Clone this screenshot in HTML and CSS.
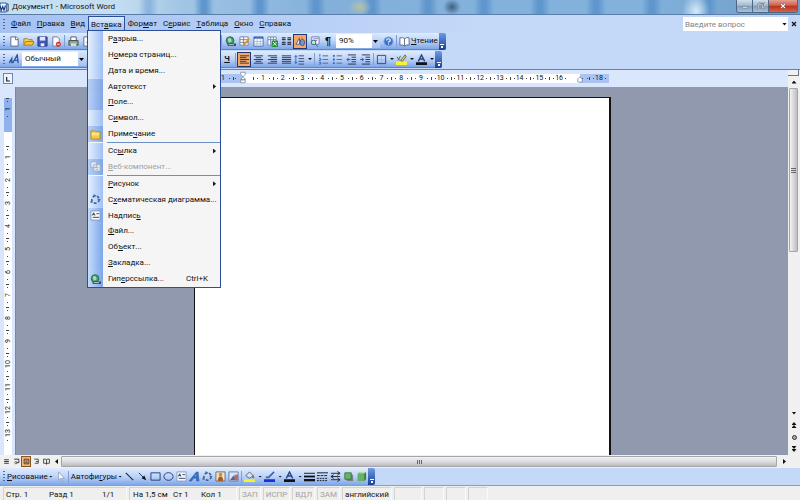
FILE: index.html
```html
<!DOCTYPE html>
<html lang="ru">
<head>
<meta charset="utf-8">
<title>Документ1 - Microsoft Word</title>
<link rel="stylesheet" href="styles.css">
</head>
<body>
<svg class="defs" aria-hidden="true">
  <symbol id="new" viewBox="0 0 12 12"><path d="M2 1h6l2 2v8H2z" fill="#fff" stroke="#56688f"/><path d="M7 1v3h3" fill="none" stroke="#56688f"/></symbol>
  <symbol id="open" viewBox="0 0 12 12"><path d="M1 10V3h4l1 1h4v2" fill="#f5d35c" stroke="#a87d18"/><path d="M1 10l2-4h9l-2 4z" fill="#ffc629" stroke="#a87d18"/></symbol>
  <symbol id="save" viewBox="0 0 12 12"><path d="M1 1h10v10H1z" fill="#4256b8" stroke="#27357e"/><path d="M3 1h6v4H3z" fill="#dfe8ff"/><path d="M4 8h4v3H4z" fill="#eef"/></symbol>
  <symbol id="perm" viewBox="0 0 12 12"><path d="M2 1h5l2 2v8H2z" fill="#fff" stroke="#6c7695"/><circle cx="8" cy="9" r="2.7" fill="#d9331f"/><path d="M6.5 9h3" stroke="#fff"/></symbol>
  <symbol id="print" viewBox="0 0 12 12"><path d="M3 1h6v4H3z" fill="#fff" stroke="#555"/><path d="M1 5h10v5H1z" fill="#9aa39d" stroke="#3d4b49"/><path d="M3 8h6v3H3z" fill="#cfe4c0"/></symbol>
  <symbol id="preview" viewBox="0 0 12 12"><path d="M2 1h6v10H2z" fill="#fff" stroke="#56688f"/><circle cx="8" cy="7" r="2.5" fill="#cbe0f7" stroke="#444"/><path d="M9.5 9l2 2" stroke="#444"/></symbol>
  <symbol id="globe" viewBox="0 0 12 12"><circle cx="5.5" cy="5" r="4.2" fill="#3f9b72" stroke="#2c6852"/><path d="M3 3q3-2 4 1t-3 3z" fill="#a5dfb2"/><path d="M4 9.500h3M8 9.500h3" stroke="#34404d" stroke-width="2.600" stroke-linecap="round"/><path d="M4 9.500h6" stroke="#dce5ee"/></symbol>
  <symbol id="drawtable" viewBox="0 0 12 12"><path d="M1 1h9v9H1zM1 4h9M5 1v9M1 7h9" fill="#fff" stroke="#77809b"/><path d="M5 10l6-7" stroke="#d89524" stroke-width="2"/></symbol>
  <symbol id="table" viewBox="0 0 12 12"><path d="M1 1h10v10H1z" fill="#fff" stroke="#4668ad"/><path d="M1 2h10" stroke="#3566c2" stroke-width="2"/><path d="M4.500 2v9M8 2v9M1 6h10M1 8.500h10" stroke="#a9bbdd"/></symbol>
  <symbol id="excel" viewBox="0 0 12 12"><path d="M1 1h9v9H1zM1 4h9M4 1v9M7 1v9" fill="#fff" stroke="#6b86b5"/><path d="M5 5h7v7H5z" fill="#278d45"/><path d="M6.500 6.500l4 4M10.500 6.500l-4 4" stroke="#fff"/></symbol>
  <symbol id="columns" viewBox="0 0 12 12"><path d="M1 2h4M1 4h4M1 7h4M1 9h4M7 2h4M7 4h4M7 7h4M7 9h4" stroke="#333b52" stroke-width="1.500"/></symbol>
  <symbol id="drawing" viewBox="0 0 12 12"><path d="M1 9L5 2v7z" fill="#f4f4f4" stroke="#4f5b78"/><ellipse cx="8" cy="7" rx="2.500" ry="3.500" fill="#7993cf" stroke="#44548e"/><path d="M7 1l4 5" stroke="#c47b2a"/></symbol>
  <symbol id="docmap" viewBox="0 0 12 12"><path d="M3 1h8v8H3z" fill="#fff" stroke="#5778b8"/><path d="M5 3h5M5 5h4" stroke="#86a"/><circle cx="5" cy="7" r="2.500" fill="#c5e2cf" stroke="#367"/><path d="M7 9l3 3" stroke="#367"/></symbol>
  <symbol id="help" viewBox="0 0 12 12"><circle cx="6" cy="6" r="5" fill="#3c73cf" stroke="#85a9df"/><path d="M4 5q0-2 2-2t2 1.500q0 1-2 2v.700M6 8.200v1.200" fill="none" stroke="#fff" stroke-width="1.200"/></symbol>
  <symbol id="book" viewBox="0 0 12 12"><path d="M6 3Q4 1 1 2v8q3-1 5 1 2-2 5-1V2Q8 1 6 3zM6 3v8" fill="#fff" stroke="#5a6785"/></symbol>
  <symbol id="left" viewBox="0 0 12 12"><path d="M1 2h10M1 4h7M1 6h10M1 8h7M1 10h10" stroke="#29304a"/></symbol>
  <symbol id="center" viewBox="0 0 12 12"><path d="M1 2h10M3 4h6M1 6h10M3 8h6M1 10h10" stroke="#29304a"/></symbol>
  <symbol id="right" viewBox="0 0 12 12"><path d="M1 2h10M4 4h7M1 6h10M4 8h7M1 10h10" stroke="#29304a"/></symbol>
  <symbol id="justify" viewBox="0 0 12 12"><path d="M1 2h10M1 4h10M1 6h10M1 8h10M1 10h10" stroke="#29304a"/></symbol>
  <symbol id="spacing" viewBox="0 0 12 12"><path d="M5 2h6M5 5h6M5 8h6M5 11h6" stroke="#3b4563"/><path d="M2 2v8M.500 3.500L2 1.500l1.500 2M.500 8.500l1.500 2 1.500-2" fill="none" stroke="#3465ba"/></symbol>
  <symbol id="numbers" viewBox="0 0 12 12"><path d="M5 2h6M5 6h6M5 10h6" stroke="#59647f"/><path d="M2 0v3M1 5h2v2H1M1 9h2v2H1" fill="none" stroke="#3465ba"/></symbol>
  <symbol id="bullets" viewBox="0 0 12 12"><path d="M5 2h6M5 6h6M5 10h6" stroke="#59647f"/><path d="M1 1h2v2H1zM1 5h2v2H1zM1 9h2v2H1z" fill="#3465ba"/></symbol>
  <symbol id="outdent" viewBox="0 0 12 12"><path d="M2 1h9M6 3.500h5M6 6h5M6 8.500h5M2 11h9" stroke="#29304a"/><path d="M5 6H1M3 4L1 6l2 2" fill="none" stroke="#2455b2"/></symbol>
  <symbol id="indent" viewBox="0 0 12 12"><path d="M2 1h9M6 3.500h5M6 6h5M6 8.500h5M2 11h9" stroke="#29304a"/><path d="M0 6h4M2 4l2 2-2 2" fill="none" stroke="#2455b2"/></symbol>
  <symbol id="border" viewBox="0 0 12 12"><path d="M1.500 1.500h9v9h-9z" fill="none" stroke="#354260"/><path d="M6 2v8M2 6h8" stroke="#9aabc9" stroke-dasharray="1 1"/></symbol>
  <symbol id="marker" viewBox="0 0 12 12"><path d="M0 8h12v4H0z" fill="#fbf12f"/><path d="M1 3l3 4M2 7l3-5" stroke="#465"/><path d="M5 7l5-6 1 2-4 5z" fill="#dfd26a" stroke="#606335"/></symbol>
  <symbol id="fontcolor" viewBox="0 0 12 12"><path d="M0 9h12v3H0z" fill="#111"/><path d="M2.500 8L6 1l3.500 7M4 5.500h4" fill="none" stroke="#2a4580" stroke-width="1.500"/></symbol>
  <symbol id="styles" viewBox="0 0 12 12"><path d="M0 10l3-5v5M1 8h2M4 10L9 1l1 9M6 7h4" fill="none" stroke="#3156a9" stroke-width="1.500"/></symbol>
  <symbol id="pointer" viewBox="0 0 12 12"><path d="M4 1v9l2-2 2 4 1-1-2-3h3z" fill="#fff" stroke="#8b96ac" stroke-width=".800"/></symbol>
  <symbol id="line" viewBox="0 0 12 12"><path d="M2 2l8 8" stroke="#1e2949" stroke-width="1.200"/></symbol>
  <symbol id="arrow" viewBox="0 0 12 12"><path d="M2 2l7 7" stroke="#1e2949"/><path d="M10 10L5 8l3-3z" fill="#111"/></symbol>
  <symbol id="rect" viewBox="0 0 12 12"><path d="M1 2h10v8H1z" fill="none" stroke="#253b74"/></symbol>
  <symbol id="oval" viewBox="0 0 12 12"><ellipse cx="6" cy="6" rx="5" ry="4.200" fill="none" stroke="#253b74"/></symbol>
  <symbol id="textbox" viewBox="0 0 12 12"><path d="M1 1h10v10H1z" fill="#fafbff" stroke="#8798bb"/><path d="M2.500 6L4 3l1.500 3M3 5h2M7 4h3M3 8h7" fill="none" stroke="#303b57"/></symbol>
  <symbol id="wordart" viewBox="0 0 12 12"><path d="M0 11l8-10h2l1 10H8V8H5l-2 3zM6 6h2V3z" fill="#2f6dcc" stroke="#3c5fa0" stroke-width=".500" fill-rule="evenodd"/></symbol>
  <symbol id="diagram" viewBox="0 0 12 12"><circle cx="6" cy="6" r="4" fill="none" stroke="#35578c" stroke-width="1.600" stroke-dasharray="3 2"/><path d="M4 0l3 2-3 2zM12 6l-3 2-1-3zM2 6l1 4-3-1z" fill="#526c96"/></symbol>
  <symbol id="clip" viewBox="0 0 12 12"><path d="M1 1h10v10H1z" fill="#ece6c9" stroke="#667"/><circle cx="6" cy="4" r="2" fill="#d68a2c"/><path d="M3 11q0-5 3-5t3 5z" fill="#a55f22"/></symbol>
  <symbol id="picture" viewBox="0 0 12 12"><path d="M1 1h10v10H1z" fill="#d8e6ff" stroke="#667b9b"/><path d="M2 10l4-5 4 5z" fill="#526599"/><path d="M7 4h4v6H7z" fill="#b86a66"/></symbol>
  <symbol id="fill" viewBox="0 0 12 12"><path d="M0 9h12v3H0z" fill="#fbf12f"/><path d="M2 5l4-4 4 4-4 3z" fill="#dfe2e8" stroke="#546078"/><path d="M10 5v3" stroke="#8a7a26" stroke-width="2"/></symbol>
  <symbol id="brush" viewBox="0 0 12 12"><path d="M0 9h12v3H0z" fill="#1731d5"/><path d="M2 7h3l6-6" fill="none" stroke="#4065a9" stroke-width="1.800"/></symbol>
  <symbol id="weight" viewBox="0 0 12 12"><path d="M0 2.500h12" stroke="#111"/><path d="M0 6h12" stroke="#111" stroke-width="2"/><path d="M0 10h12" stroke="#111" stroke-width="2.500"/></symbol>
  <symbol id="dash" viewBox="0 0 12 12"><path d="M0 2h12" stroke="#111"/><path d="M0 5h12" stroke="#111" stroke-dasharray="3 1"/><path d="M0 8h12M0 10.500h12" stroke="#111" stroke-dasharray="2 1"/></symbol>
  <symbol id="arrows" viewBox="0 0 12 12"><path d="M1 2.500h10M1 6h10M1 9.500h10" stroke="#222"/><path d="M8 .500l3 2-3 2M4 4L1 6l3 2M8 7.500l3 2-3 2" fill="none" stroke="#222"/></symbol>
  <symbol id="shadow" viewBox="0 0 12 12"><path d="M4 4h7v7H4z" fill="#78827d"/><path d="M2 2h7v7H2z" fill="#67b365" stroke="#387a42"/></symbol>
  <symbol id="cube" viewBox="0 0 12 12"><path d="M2 3l2-2h7v8l-2 2H2z" fill="#397d3e"/><path d="M2 3l2-2h7L9 3z" fill="#b0dca0"/><path d="M2 3h7v8H2z" fill="#67b365"/></symbol>
  <symbol id="note" viewBox="0 0 12 12"><path d="M1 2h4l1 1h5v8H1z" fill="#f5c946" stroke="#ab8730"/><path d="M2 4h8v3H2z" fill="#ffe484"/></symbol>
  <symbol id="web" viewBox="0 0 12 12"><path d="M1 1h6v6H1zM4 4h7v7H4z" fill="#e5eaf4" stroke="#a3afc5"/><path d="M6 7h3M6 9h3" stroke="#a3afc5"/></symbol>
  <symbol id="views" viewBox="0 0 12 12"><path d="M2 3h8M2 6h8M2 9h8" stroke="#222" stroke-width="1.500"/></symbol>
  <symbol id="webview" viewBox="0 0 12 12"><path d="M2 2h8v6H6" fill="none" stroke="#222" stroke-width="1.500"/><circle cx="5" cy="8" r="2" fill="none" stroke="#222"/></symbol>
  <symbol id="printview" viewBox="0 0 12 12"><path d="M2 2h8v8H2zM4 5h4M4 7.500h4" fill="none" stroke="#222" stroke-width="1.300"/></symbol>
  <symbol id="outline" viewBox="0 0 12 12"><path d="M2 2h7v4H5M9 6v3H3" fill="none" stroke="#222" stroke-width="1.300"/></symbol>
  <symbol id="reading" viewBox="0 0 12 12"><path d="M1 2h4l1 1 1-1h4v7H7l-1 2-1-2H1zM6 3v7" fill="none" stroke="#222" stroke-width="1.300"/></symbol>
</svg>

<header class="titlebar">
  <svg class="logo" viewBox="0 0 10 12" aria-hidden="true"><path d="M0 1h7v10H0z" fill="#eef5ff" stroke="#244d91"/><path d="M0 4l1.500 5L3 5l1.500 4L6 4" fill="none" stroke="#163c86" stroke-width="1.300"/><path d="M8 2h1v8H8" fill="none" stroke="#333"/></svg>
  <h1>Документ1 - Microsoft Word</h1>
  <div class="wincontrols">
    <button aria-label="Свернуть"><svg viewBox="0 0 12 12"><path d="M2 7h8v2H2z" fill="#fff" stroke="#53657a" stroke-width=".700"/></svg></button>
    <button aria-label="Восстановить"><svg viewBox="0 0 12 12"><path d="M4 3V1h7v7H9M2 4h6v7H2z" fill="none" stroke="#53657a" stroke-width="2.400"/><path d="M4 3V1h7v7H9M2 4h6v7H2z" fill="none" stroke="#fff"/></svg></button>
    <button class="close" aria-label="Закрыть"><svg viewBox="0 0 12 12"><path d="M3 3l6 6M9 3L3 9" stroke="#652b2b" stroke-width="3"/><path d="M3 3l6 6M9 3L3 9" stroke="#fff" stroke-width="1.800"/></svg></button>
  </div>
</header>

<nav class="menubar">
  <span class="grip"></span>
  <button><u>Ф</u>айл</button>
  <button><u>П</u>равка</button>
  <button><u>В</u>ид</button>
  <div class="opened">
    <button class="active">Вст<u>а</u>вка</button>
    <div class="menu">
      <button>Р<u>а</u>зрыв...</button>
      <button>Н<u>о</u>мера страниц...</button>
      <button><u>Д</u>ата и время...</button>
      <button class="extra">Ав<u>т</u>отекст<i class="sub"></i></button>
      <button class="extra"><u>П</u>оле...</button>
      <button>С<u>и</u>мвол...</button>
      <button class="extra"><svg><use href="#note"/></svg>Приме<u>ч</u>ание</button>
      <hr>
      <button>Сс<u>ы</u>лка<i class="sub"></i></button>
      <button class="extra" disabled><svg><use href="#web"/></svg><u>В</u>еб-компонент...</button>
      <hr>
      <button><u>Р</u>исунок<i class="sub"></i></button>
      <button><svg><use href="#diagram"/></svg>С<u>х</u>ематическая диаграмма...</button>
      <button class="deep"><svg><use href="#textbox"/></svg>Надпис<u>ь</u></button>
      <button class="deep"><u>Ф</u>айл...</button>
      <button class="deep">Об<u>ъ</u>ект...</button>
      <button class="deep"><u>З</u>акладка...</button>
      <button class="deep"><svg><use href="#globe"/></svg>Гип<u>е</u>рссылка...<kbd>Ctrl+K</kbd></button>
    </div>
  </div>
  <button>Фор<u>м</u>ат</button>
  <button>С<u>е</u>рвис</button>
  <button><u>Т</u>аблица</button>
  <button><u>О</u>кно</button>
  <button><u>С</u>правка</button>
  <label class="ask"><input type="text" placeholder="Введите вопрос" aria-label="Введите вопрос"><i class="drop"></i></label>
  <button class="docclose" aria-label="Закрыть документ"><svg viewBox="0 0 12 12"><path d="M2 2l8 8M10 2l-8 8" stroke="#111" stroke-width="2.400"/></svg></button>
</nav>

<div class="toolrow">
  <div class="toolbar">
    <div class="lead">
      <span class="grip"></span>
      <button aria-label="Создать"><svg><use href="#new"/></svg></button>
      <button aria-label="Открыть"><svg><use href="#open"/></svg></button>
      <button aria-label="Сохранить"><svg><use href="#save"/></svg></button>
      <button aria-label="Разрешения"><svg><use href="#perm"/></svg></button>
      <span class="sep"></span>
      <button aria-label="Печать"><svg><use href="#print"/></svg></button>
      <button aria-label="Просмотр"><svg><use href="#preview"/></svg></button>
    </div>
    <span class="sep"></span>
    <button aria-label="Гиперссылка"><svg><use href="#globe"/></svg></button>
    <button aria-label="Границы"><svg><use href="#drawtable"/></svg></button>
    <button aria-label="Таблица"><svg><use href="#table"/></svg></button>
    <button aria-label="Excel"><svg><use href="#excel"/></svg></button>
    <button aria-label="Колонки"><svg><use href="#columns"/></svg></button>
    <button class="on" aria-label="Рисование"><svg><use href="#drawing"/></svg></button>
    <button aria-label="Схема документа"><svg><use href="#docmap"/></svg></button>
    <button class="pilcrow" aria-label="Знаки">¶</button>
    <select class="zoom" aria-label="Масштаб"><option>90%</option></select>
    <button aria-label="Справка"><svg><use href="#help"/></svg></button>
    <span class="sep"></span>
    <button class="wide"><svg><use href="#book"/></svg><span><u>Ч</u>тение</span></button>
    <button class="cap" aria-label="Параметры"><i></i></button>
  </div>
</div>
<div class="toolrow">
  <div class="toolbar">
    <div class="lead">
      <span class="grip"></span>
      <button aria-label="Стили"><svg><use href="#styles"/></svg></button>
      <select class="style" aria-label="Стиль"><option>Обычный</option></select>
    </div>
    <button class="underline" aria-label="Подчеркнутый"><b><u>Ч</u></b></button>
    <span class="sep"></span>
    <button class="on" aria-label="По левому краю"><svg><use href="#left"/></svg></button>
    <button aria-label="По центру"><svg><use href="#center"/></svg></button>
    <button aria-label="По правому краю"><svg><use href="#right"/></svg></button>
    <button aria-label="По ширине"><svg><use href="#justify"/></svg></button>
    <button class="split" aria-label="Интервал"><svg><use href="#spacing"/></svg><i class="drop"></i></button>
    <span class="sep"></span>
    <button aria-label="Нумерация"><svg><use href="#numbers"/></svg></button>
    <button aria-label="Маркеры"><svg><use href="#bullets"/></svg></button>
    <button aria-label="Уменьшить отступ"><svg><use href="#outdent"/></svg></button>
    <button aria-label="Увеличить отступ"><svg><use href="#indent"/></svg></button>
    <span class="sep"></span>
    <button class="split" aria-label="Граница"><svg><use href="#border"/></svg><i class="drop"></i></button>
    <button class="split" aria-label="Выделение"><svg><use href="#marker"/></svg><i class="drop"></i></button>
    <button class="split" aria-label="Цвет шрифта"><svg><use href="#fontcolor"/></svg><i class="drop"></i></button>
    <button class="cap" aria-label="Параметры"><i></i></button>
  </div>
</div>

<main class="work">
  <div class="editor">
    <div class="hruler">
      <button class="tab" aria-label="Табуляция"><svg viewBox="0 0 12 12"><path d="M4 3v6h5" fill="none" stroke="#222" stroke-width="1.800"/></svg></button>
      <div class="hscale">
        <ol class="ticks margin start"><li></li><li>1</li><li></li></ol>
        <ol class="ticks body"></ol>
        <ol class="ticks margin end"><li></li><li>18</li></ol>
        <svg class="handle first" viewBox="0 0 8 16"><path d="M1 1h6v3L4 7 1 4zM4 7l3 3v1H1v-1zM1 11h6v4H1z" fill="#fff" stroke="#7a8497"/></svg>
        <svg class="handle last" viewBox="0 0 8 16"><path d="M4 7l3 3v4H1v-4z" fill="#fff" stroke="#7a8497"/></svg>
      </div>
    </div>
    <div class="canvas">
      <div class="vruler"><ol class="vticks top"><li>1</li></ol><ol class="vticks rest"></ol></div>
      <div class="desk"><article class="page"></article></div>
    </div>
  </div>
  <div class="vscroll">
    <span class="splitter"></span>
    <button aria-label="Вверх"><i class="up"></i></button>
    <div class="vthumb"><i class="ridge"></i></div>
    <button aria-label="Вниз"><i class="drop"></i></button>
    <button aria-label="Предыдущая"><i class="up"></i><i class="up"></i></button>
    <button aria-label="Выбор объекта"><i class="ball"></i></button>
    <button aria-label="Следующая"><i class="drop"></i><i class="drop"></i></button>
  </div>
</main>

<div class="hscroll">
  <button aria-label="Обычный"><svg><use href="#views"/></svg></button>
  <button aria-label="Веб-документ"><svg><use href="#webview"/></svg></button>
  <button class="on" aria-label="Разметка"><svg><use href="#printview"/></svg></button>
  <button aria-label="Структура"><svg><use href="#outline"/></svg></button>
  <button aria-label="Чтение"><svg><use href="#reading"/></svg></button>
  <button class="back" aria-label="Влево"><i class="sub flip"></i></button>
  <div class="hthumb"><i class="ridge"></i></div>
  <button class="fwd" aria-label="Вправо"><i class="sub"></i></button>
</div>

<div class="toolrow drawrow">
  <div class="toolbar">
    <span class="grip"></span>
    <button class="word"><span><u>Р</u>исование</span><i class="drop"></i></button>
    <button class="pick" aria-label="Выбор"><svg><use href="#pointer"/></svg></button>
    <span class="sep"></span>
    <button class="word auto"><span>Автофи<u>г</u>уры</span><i class="drop"></i></button>
    <button aria-label="Линия"><svg><use href="#line"/></svg></button>
    <button aria-label="Стрелка"><svg><use href="#arrow"/></svg></button>
    <button aria-label="Прямоугольник"><svg><use href="#rect"/></svg></button>
    <button aria-label="Овал"><svg><use href="#oval"/></svg></button>
    <button aria-label="Надпись"><svg><use href="#textbox"/></svg></button>
    <button aria-label="WordArt"><svg><use href="#wordart"/></svg></button>
    <button aria-label="Диаграмма"><svg><use href="#diagram"/></svg></button>
    <button aria-label="Картинка"><svg><use href="#clip"/></svg></button>
    <button aria-label="Рисунок"><svg><use href="#picture"/></svg></button>
    <span class="sep"></span>
    <button class="split" aria-label="Заливка"><svg><use href="#fill"/></svg><i class="drop"></i></button>
    <button class="split" aria-label="Цвет линий"><svg><use href="#brush"/></svg><i class="drop"></i></button>
    <button class="split" aria-label="Цвет шрифта"><svg><use href="#fontcolor"/></svg><i class="drop"></i></button>
    <button aria-label="Тип линии"><svg><use href="#weight"/></svg></button>
    <button aria-label="Тип штриха"><svg><use href="#dash"/></svg></button>
    <button aria-label="Вид стрелки"><svg><use href="#arrows"/></svg></button>
    <button aria-label="Тень"><svg><use href="#shadow"/></svg></button>
    <button aria-label="Объем"><svg><use href="#cube"/></svg></button>
    <button class="cap" aria-label="Параметры"><i></i></button>
  </div>
</div>

<footer class="status">
  <div class="panel where"><span>Стр. 1</span><span>Разд 1</span><span>1/1</span></div>
  <div class="panel at"><span>На 1,5 см</span><span>Ст 1</span><span>Кол 1</span></div>
  <div class="panel off">ЗАП</div>
  <div class="panel off">ИСПР</div>
  <div class="panel off">ВДЛ</div>
  <div class="panel off">ЗАМ</div>
  <div class="panel lang">английский</div>
  <div class="panel blank"></div>
  <div class="panel blank"></div>
  <div class="panel blank"></div>
  <div class="panel blank"></div>
</footer>
<script src="rulers.js"></script>
</body>
</html>
```
FILE: rulers.js
```js
// Fills both rulers with their centimetre marks.
function fill(selector, count) {
  const list = document.querySelector(selector);
  for (let n = 1; n <= count; n += 1) {
    const item = document.createElement('li');
    item.textContent = n;
    list.append(item);
  }
}
fill('.ticks.body', 16);
fill('.vticks.rest', 13);
```
FILE: styles.css
```css
* { box-sizing: border-box; }
body {
  margin: 0;
  height: 100vh;
  display: flex;
  flex-direction: column;
  overflow: hidden;
  background: #c4d8f8;
  color: #111;
  font: 8px/12px Roboto, "Liberation Sans", sans-serif;
}
button, input, select { font: inherit; color: inherit; margin: 0; padding: 0; border: 0; background: none; border-radius: 0; }
ol { margin: 0; padding: 0; list-style: none; }
.defs { position: absolute; width: 0; height: 0; }
button svg { width: 11px; height: 11px; flex: none; }
button { display: flex; align-items: center; justify-content: center; white-space: nowrap; }
u { text-underline-offset: 1px; text-decoration-thickness: 1px; }

.drop, .sub, .up { flex: none; width: 5px; height: 3px; background: #111; clip-path: polygon(0 0, 100% 0, 50% 100%); }
.up { clip-path: polygon(50% 0, 100% 100%, 0 100%); }
.sub { width: 3px; height: 5px; clip-path: polygon(0 0, 100% 50%, 0 100%); }
.flip { transform: rotate(180deg); }
.grip { flex: none; width: 2px; height: 11px; margin: 0 2px 0 3px; background: repeating-linear-gradient(#4b6cab 0 1px, transparent 1px 3px); }
.sep { flex: none; width: 1px; height: 12px; margin: 0 1px; background: #7f9fd4; }

.titlebar {
  display: flex;
  align-items: center;
  height: 15px;
  flex: none;
  border-bottom: 1px solid #5b7ea8;
  background:
    radial-gradient(ellipse 9px 8px at 56.500% 50%, #3f5f81, transparent),
    radial-gradient(ellipse 12px 8px at 45% 50%, #b3c2a3, transparent),
    radial-gradient(ellipse 20px 12px at 96% 0, #c7dff3, transparent),
    radial-gradient(ellipse 14px 18px at 87% 80%, #d4eafa, transparent),
    linear-gradient(90deg, #c5def2, #c5def2 110px, transparent 180px),
    repeating-linear-gradient(90deg, transparent 0 26px, #5f96ce 34px 38px, transparent 46px 56px),
    linear-gradient(90deg, #cfe3f4, #a9cbe7 18%, #83b0da 40%, #82b2dc 80%, #6f9cc8);
}
.titlebar h1 { margin: 0 auto 0 3px; font-size: 8px; font-weight: 400; }
.logo { width: 9px; height: 11px; }
.wincontrols { display: flex; align-self: flex-start; margin-right: 2px; border: 1px solid #4f6785; border-top: 0; border-radius: 0 0 3px 3px; overflow: hidden; }
.wincontrols button { width: 16px; height: 12px; background: linear-gradient(#d0dfec, #a5bace 45%, #7f9cbb 50%, #a6c3dc); border-right: 1px solid #4f6785; }
.wincontrols svg { width: 8px; height: 8px; }
.wincontrols .close { width: 28px; border: 0; background: linear-gradient(#e3a193, #cf5f4a 45%, #b8301c 50%, #d2664b); }

.menubar { display: flex; align-items: center; height: 18px; flex: none; background: linear-gradient(90deg, #a5c2f2, #c4d8f8 60%); }
.menubar > button, .active { padding: 0 3px; height: 16px; }
.menubar > .grip { margin-right: 3px; }
.opened { position: relative; }
.menubar .active { padding: 0 2px; border: 1px solid #27509a; border-bottom: 0; background: linear-gradient(#dfeafc, #9dbcf0); }
.menu {
  position: absolute;
  z-index: 5;
  left: -1px;
  top: 14px;
  width: 134px;
  height: 258px;
  display: flex;
  flex-direction: column;
  border: 1px solid #2b5099;
  background: #f5f5f5;
}
.menu button { position: relative; flex: 1; justify-content: flex-start; padding-left: 20px; text-align: left; background: linear-gradient(90deg, #e5f0ff, #9fc0f4) left / 15px 100% no-repeat; }
.menu .extra { background-image: linear-gradient(90deg, #b8d0f6, #7fa6e6); }
.menu .deep { background-image: linear-gradient(90deg, #c5dcfb, #7ba6ea); }
.menu svg { position: absolute; left: 2px; width: 11px; height: 11px; }
.menu .sub { margin-left: auto; margin-right: 4px; }
.menu kbd { margin-left: auto; margin-right: 12px; font: inherit; }
.menu button:disabled { color: #a0a0a0; }
.menu hr { flex: none; width: 113px; height: 1px; margin: 0 0 0 auto; border: 0; background: #6c8fc5; }
.ask { display: flex; align-items: center; margin-left: auto; width: 105px; height: 14px; padding-right: 1px; background: #fff; }
.ask input { flex: 1; min-width: 0; height: 13px; padding: 0 2px; outline: 0; }
.ask input::placeholder { color: #858585; opacity: 1; }
.docclose svg { width: 6px; height: 6px; }

.toolrow { display: flex; height: 18px; flex: none; }
.toolbar { display: flex; align-items: center; height: 17px; background: linear-gradient(#e0ecfe, #bcd3f8 50%, #7ea6e8); border-bottom: 1px solid #5b83c8; border-radius: 0 2px 2px 0; }
.lead { display: flex; align-items: center; width: 220px; }
.toolbar button { min-width: 14px; height: 15px; }
.toolbar .on { width: 14px; border: 1px solid #23386f; background: #f6a766; }
.toolbar .split { gap: 3px; padding: 0 2px; width: 20px; }
.toolbar .split .drop, .word .drop { width: 4px; height: 2px; }
.toolbar .wide, .toolbar .word { gap: 1px; padding: 0 1px; }
.pilcrow { font: bold 11px/12px "Liberation Sans", sans-serif; }
.toolbar .cap { align-self: stretch; min-width: 7px; height: 17px; align-items: flex-end; background: linear-gradient(#6f9ae2, #173f97); border-radius: 0 2px 2px 0; padding-bottom: 2px; }
.cap i { width: 4px; height: 4px; border-top: 1px solid #fff; background: linear-gradient(#fff, #fff) bottom / 2px 2px no-repeat; }
select { appearance: none; height: 14px; padding: 0 3px; outline: 0; }
.zoom, .style {
  background:
    url("data:image/svg+xml,%3Csvg xmlns='http://www.w3.org/2000/svg' viewBox='0 0 5 3'%3E%3Cpath d='M0 0h5L2.5 3z'/%3E%3C/svg%3E") right 2px center / 5px 3px no-repeat,
    linear-gradient(#d5e4fc, #a4c2f2) right / 8px 100% no-repeat,
    #fff;
}
.zoom { width: 44px; margin: 0 1px; }
.style { width: 64px; margin-left: 1px; }

.work { display: flex; flex: 1; min-height: 0; border-top: 1px solid #717f99; }
.editor { display: flex; flex-direction: column; flex: 1; min-width: 0; }
.hruler { display: flex; height: 17px; flex: none; background: #d9e6fb; align-items: center; }
.tab { width: 10px; height: 11px; margin-left: 3px; border: 1px solid #6d85b3; background: #eff5ff; }
.tab svg { width: 8px; height: 8px; }
.hscale { position: relative; display: flex; width: 406px; height: 9px; margin-left: 190px; font-size: 7px; line-height: 9px; }
.ticks { display: flex; flex: 1; background: #fff; }
.ticks li { flex: 1; text-align: center; background: linear-gradient(#444, #444) left / 1px 3px no-repeat, linear-gradient(#444, #444) 20% / 1px 1px no-repeat, linear-gradient(#444, #444) 85% / 1px 1px no-repeat; }
.ticks.body { padding: 0 11px 0 10px; }
.ticks.margin { flex: 0 0 40px; background: #a9c4f2; }
.ticks.start li { flex: 0 0 10px; }
.ticks.start li:nth-child(2) { flex-basis: 20px; }
.ticks.end { flex-basis: 29px; }
.ticks.end li:first-child { flex: 0 0 9px; }
.handle { position: absolute; width: 6px; height: 15px; top: -4px; left: 37px; }
.handle.last { left: 374px; }
.canvas { display: flex; flex: 1; min-height: 0; }
.vruler { width: 15px; flex: none; display: flex; flex-direction: column; padding: 11px 3px 0 4px; background: #d9e6fb; overflow: hidden; }
.vticks { background: #fff; font-size: 7px; line-height: 8px; }
.vticks li { display: flex; align-items: center; justify-content: center; height: 23px; writing-mode: vertical-rl; transform: rotate(180deg); background: linear-gradient(#444, #444) center bottom / 3px 1px no-repeat, linear-gradient(#444, #444) center 20% / 1px 1px no-repeat, linear-gradient(#444, #444) center 85% / 1px 1px no-repeat; }
.vticks.top { flex: none; height: 34px; background: #8fb1ec; }
.vticks.rest { flex: 1; padding-top: 14px; }
.desk { flex: 1; padding: 10px 177px 0 178px; background: #9099ae; border-left: 1px solid #7e879d; }
.page { height: 100%; background: #fff; border: solid #111; border-width: 1px 2px 0 1px; }
.vscroll { width: 12px; flex: none; display: flex; flex-direction: column; align-items: stretch; background: #f0f0f0; }
.vscroll button { flex-direction: column; height: 12px; }
.splitter { height: 6px; border: 1px solid #6d7585; border-width: 0 1px 1px 0; margin-right: 1px; }
.vthumb, .hthumb { flex: 1; display: flex; align-items: center; justify-content: center; border: 1px solid #a5a5a5; background: linear-gradient(90deg, #f4f4f4, #d8d8db 50%, #bdbdc2); border-radius: 1px; }
.vthumb { margin: 0 2px 0 1px; flex: none; height: 164px; margin-bottom: auto; }
.vthumb .ridge { width: 5px; height: 5px; background: repeating-linear-gradient(#666 0 1px, transparent 1px 2px); }
.vscroll .drop, .vscroll .up { width: 5px; height: 3px; }
.ball { width: 5px; height: 5px; border: 1px solid #333; border-radius: 50%; background: #aaa; }

.hscroll { display: flex; align-items: center; height: 13px; flex: none; padding-left: 1px; background: #f0f0f0; }
.hscroll button { width: 10px; height: 11px; }
.hscroll button svg { width: 7px; height: 7px; }
.hscroll .on { border: 1px solid #8a5320; background: #f8b575; }
.hthumb { height: 11px; background: linear-gradient(#f2f2f2, #dcdce0 50%, #bbbbc0); }
.hthumb .ridge { width: 5px; height: 4px; background: repeating-linear-gradient(90deg, #666 0 1px, transparent 1px 2px); }
.hscroll .fwd { width: 23px; padding-right: 8px; }

.drawrow { border-bottom: 1px solid #7fa0cf; }
.drawrow .toolbar { border-bottom: 0; }
.drawrow .toolbar button { min-width: 13px; }
.drawrow .toolbar .cap { min-width: 7px; }
.drawrow .grip { margin-right: 1px; }

.status { display: flex; align-items: stretch; height: 14px; flex: none; gap: 2px; padding: 1px 3px 0; background: #efefed; line-height: 13px; }
.panel { border: 1px solid #d3d3d0; border-bottom: 0; border-right-color: #fafafa; padding: 0 2px; white-space: nowrap; }
.where { display: grid; grid-template-columns: 43px 53px 24px; width: 124px; }
.at { display: grid; grid-template-columns: 40px 28px 36px; width: 108px; padding-left: 3px; }
.off { color: #a3a3a3; }
.blank { width: 20px; }
.lang + .blank { width: 28px; }
```
